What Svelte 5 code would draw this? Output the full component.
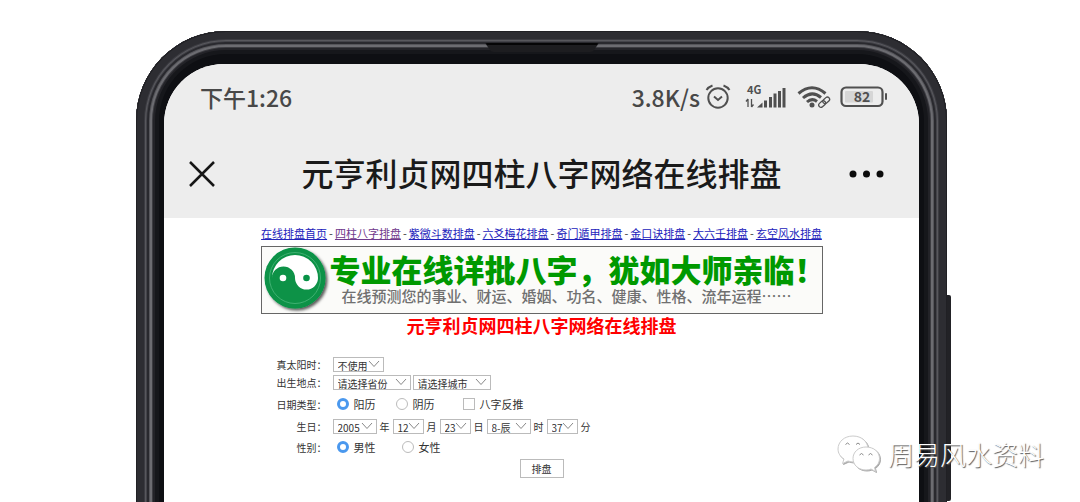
<script lang="ts">
    const links = [
        "在线排盘首页",
        "四柱八字排盘",
        "紫微斗数排盘",
        "六爻梅花排盘",
        "奇门遁甲排盘",
        "金口诀排盘",
        "大六壬排盘",
        "玄空风水排盘",
    ];

    const birthday = [
        { value: "2005", unit: "年", size: "year" },
        { value: "12", unit: "月", size: "short" },
        { value: "23", unit: "日", size: "short" },
        { value: "8-辰", unit: "时", size: "year" },
        { value: "37", unit: "分", size: "short" },
    ];

    let calendar = $state("solar");
    let gender = $state("male");
</script>

{#snippet dropdown(value: string, size: string, label: string, id: string | undefined = undefined)}
    <span class="dropdown {size}">
        <select {id} aria-label={label}>
            <option>{value}</option>
        </select>
        <svg width="12" height="8" viewBox="0 0 12 8" aria-hidden="true">
            <path d="M1 1 L6 6.5 L11 1" fill="none" stroke="#888" />
        </svg>
    </span>
{/snippet}

<main>
    <div class="phone">
        <svg class="speaker" width="114" height="10" viewBox="0 0 114 10" aria-hidden="true">
            <path d="M0 0 H114 L109 7 Q108 9 105 9 H9 Q6 9 5 7 Z" fill="#1d1d20" />
            <path d="M1 0 H113 L112 2 H2 Z" fill="#050506" />
        </svg>

        <div class="screen">
            <header>
                <!-- Status bar -->
                <div class="status">
                    <span class="time">下午1:26</span>
                    <span class="speed">3.8K/s</span>
                    <svg class="alarm" width="26" height="26" viewBox="0 0 26 26" fill="none" stroke="#505050" stroke-width="2">
                        <circle cx="13" cy="14" r="9.7" />
                        <path d="M9 12.5 L13 16 L17 12.5" />
                        <path d="M1.5 6 Q3.5 3 7.5 1.5 M24.5 6 Q22.5 3 18.5 1.5" />
                    </svg>
                    <svg class="signal" width="42" height="32" viewBox="0 -4 42 32" fill="#505050">
                        <text x="2" y="9" font-size="11" font-weight="700">4G</text>
                        <path d="M3 14 V22 M1 16.5 L3 14 M6.5 14 V22 M8.5 19.5 L6.5 22" fill="none" stroke="#505050" stroke-width="1.3" />
                        <path d="M12 22.5 L17.5 17.5 V22.5 Z" />
                        <path d="M19 15.5 h3 v7 h-3z M24 12 h3 v10.5 h-3z M28.5 8.5 h3 v14 h-3z M33 6 h3 v16.5 h-3z M37.5 3 h3 v19.5 h-3z" />
                    </svg>
                    <svg class="wifi" width="34" height="24" viewBox="0 0 34 24" fill="none" stroke="#505050">
                        <path d="M1.5 8.5 Q15 -3 28.5 8.5" stroke-width="3" />
                        <path d="M6 13 Q15 5 24 12.5" stroke-width="3" />
                        <path d="M10 17 Q15 12.5 20 16.5" stroke-width="3" />
                        <circle cx="15" cy="20" r="2.5" fill="#505050" stroke="none" />
                        <g transform="rotate(-42 27 17)" stroke-width="1.3">
                            <rect x="20.5" y="15" width="7.5" height="4.5" rx="2.2" />
                            <rect x="26" y="15" width="7.5" height="4.5" rx="2.2" />
                        </g>
                    </svg>
                    <svg class="battery" width="48" height="24" viewBox="0 0 48 24">
                        <rect x="1.5" y="2.5" width="41" height="18.5" rx="4.5" fill="none" stroke="#505050" stroke-width="2.2" />
                        <rect x="5" y="6" width="28" height="11.5" rx="1" fill="#d6d6d6" />
                        <rect x="45" y="8" width="2" height="7" rx="1" fill="#505050" />
                        <text x="22" y="16.5" text-anchor="middle" font-size="14" font-weight="700" fill="#505050">82</text>
                    </svg>
                </div>

                <!-- Title bar -->
                <div class="titlebar">
                    <button aria-label="关闭">
                        <svg width="28" height="28" viewBox="0 0 28 28">
                            <path d="M2 2 L26 26 M26 2 L2 26" stroke="#161616" stroke-width="2.5" />
                        </svg>
                    </button>
                    <h1>元亨利贞网四柱八字网络在线排盘</h1>
                    <button aria-label="更多">
                        <svg width="36" height="8" viewBox="0 0 36 8" fill="#0c0c0c">
                            <circle cx="4" cy="4" r="3.5" />
                            <circle cx="17.5" cy="4" r="3.5" />
                            <circle cx="31" cy="4" r="3.5" />
                        </svg>
                    </button>
                </div>
            </header>

            <div class="page">
                <nav>
                    {#each links as link, i}
                        {#if i > 0}<span>-</span>{/if}
                        <a href="#{i}" class:visited={i === 1}>{link}</a>
                    {/each}
                </nav>

                <div class="banner">
                    <svg width="68" height="66" viewBox="0 0 68 66" aria-hidden="true">
                        <defs>
                            <filter id="shade" x="-20%" y="-20%" width="140%" height="140%">
                                <feDropShadow dx="2" dy="2" stdDeviation="1.5" flood-color="#000" flood-opacity="0.65" />
                            </filter>
                        </defs>
                        <circle cx="33" cy="31" r="30.5" fill="#079246" filter="url(#shade)" />
                        <circle cx="33" cy="31" r="25.5" fill="none" stroke="#3fb071" />
                        <path d="M10 31 A23 23 0 0 1 56 31 A11.5 11.5 0 0 1 33 31 A11.5 11.5 0 0 0 10 31 Z" fill="#fff" />
                        <circle cx="21" cy="31" r="3.3" fill="#fff" />
                        <circle cx="44.5" cy="31" r="3.3" fill="#079246" />
                    </svg>
                    <div class="banner-text">
                        <strong>专业在线详批八字，犹如大师亲临！</strong>
                        <span>在线预测您的事业、财运、婚姻、功名、健康、性格、流年运程……</span>
                    </div>
                </div>

                <h2>元亨利贞网四柱八字网络在线排盘</h2>

                <form>
                    <div class="row tight">
                        <label class="name" for="sun">真太阳时：</label>
                        {@render dropdown("不使用", "medium", "真太阳时", "sun")}
                    </div>
                    <div class="row tight">
                        <label class="name" for="province">出生地点：</label>
                        {@render dropdown("请选择省份", "wide", "省份", "province")}
                        {@render dropdown("请选择城市", "wide", "城市")}
                    </div>
                    <div class="row dates">
                        <span class="name">日期类型：</span>
                        <label class="choice"><input type="radio" name="calendar" value="solar" bind:group={calendar} />阳历</label>
                        <label class="choice"><input type="radio" name="calendar" value="lunar" bind:group={calendar} />阴历</label>
                        <label class="choice reverse"><input type="checkbox" />八字反推</label>
                    </div>
                    <div class="row">
                        <span class="name">生日：</span>
                        {#each birthday as part}
                            {@render dropdown(part.value, part.size, part.unit)}
                            <span class="unit">{part.unit}</span>
                        {/each}
                    </div>
                    <div class="row gender">
                        <span class="name">性别：</span>
                        <label class="choice"><input type="radio" name="gender" value="male" bind:group={gender} />男性</label>
                        <label class="choice"><input type="radio" name="gender" value="female" bind:group={gender} />女性</label>
                    </div>
                    <button class="submit" type="button">排盘</button>
                </form>
            </div>
        </div>
    </div>

    <!-- Account name over the corner -->
    <div class="account">
        <svg width="44" height="38" viewBox="0 0 44 38" aria-hidden="true">
            <path d="M16 1 C7 1 1 7 1 14 C1 18 3 21.5 7 24 L5.5 28.5 L11 26 Q14 27 17 27 C25 27 31 21 31 14 C31 7 25 1 16 1 Z" />
            <path d="M29 12 C21.5 12 16 17 16 23.5 C16 30 21.5 35 29 35 Q32 35 34 34 L38.5 36.5 L37.5 32.5 C41 30 42.5 27 42.5 23.5 C42.5 17 37 12 29 12 Z" />
            <path class="eyes" d="M8.5 9.5 Q10.5 6.5 12.5 9.5 M19 9.5 Q21 6.5 23 9.5 M22.5 20 Q24.5 17 26.5 20 M31.5 20 Q33.5 17 35.5 20" />
        </svg>
        <span>周易风水资料</span>
    </div>
</main>

<style>
    :global(body) {
        margin: 0;
        background: #fff;
    }

    main {
        position: relative;
        box-sizing: border-box;
        height: 100vh;
        padding: 31px 133px 0 136px;
        overflow: hidden;
        font-family: "Noto Sans CJK SC", sans-serif;
        color: #333;
    }

    button {
        padding: 0;
        border: none;
        background: none;
        font-family: inherit;
        cursor: pointer;
    }

    svg {
        display: block;
        flex: none;
    }

    /* Phone body, the rings are the metal edge */
    .phone {
        position: relative;
        box-sizing: border-box;
        min-height: 100vh;
        padding: 33px 28px 0;
        border-radius: 90px 90px 0 0;
        background: #0e0f13;
        box-shadow:
            inset 0 0 0 1px #202024,
            inset 0 0 0 8px #2d2d32,
            inset 0 0 0 9px #3c3c42,
            inset 0 0 0 10px #58585d,
            inset 0 0 0 11px #44444a,
            inset 0 0 0 13px #29292e,
            inset 0 0 0 14px #55555a,
            inset 0 0 0 16px #6c6c71,
            inset 0 0 0 17px #3c3c41,
            inset 0 0 0 19px #232328,
            inset 0 0 0 23px #16171b;
    }

    .phone::after {
        content: "";
        position: absolute;
        top: 264px;
        right: -4px;
        width: 4px;
        height: 206px;
        border-radius: 0 2px 2px 0;
        background: #222226;
    }

    .speaker {
        position: absolute;
        top: 12px;
        left: 50%;
        margin-left: -57px;
    }

    .screen {
        min-height: 100vh;
        border-radius: 60px 60px 0 0;
        background: #fff;
        overflow: hidden;
    }

    header {
        background: #ededed;
    }

    .status {
        display: flex;
        align-items: center;
        height: 66px;
        padding: 0 31px 0 36px;
        color: #484848;
        font-size: 23px;
        font-weight: 500;
        line-height: 24px;
    }

    .speed {
        margin-left: auto;
    }

    .alarm {
        margin-left: 5px;
    }

    .signal {
        margin-left: 14px;
    }

    .wifi {
        margin-left: 10px;
    }

    .battery {
        margin-left: 9px;
    }

    .titlebar {
        display: flex;
        align-items: center;
        height: 88px;
        padding: 0 34px 0 24px;
    }

    h1 {
        flex: 1;
        margin: 0;
        padding: 0 0 4px 18px;
        color: #1a1a1a;
        font-size: 32px;
        font-weight: 500;
        line-height: 40px;
        text-align: center;
        white-space: nowrap;
    }

    .page {
        width: 562px;
        max-width: 100%;
        margin: 0 auto;
        padding-top: 7px;
    }

    nav {
        display: flex;
        justify-content: center;
        gap: 2px;
        font-size: 11px;
        line-height: 16px;
        white-space: nowrap;
    }

    a {
        color: #2222bb;
    }

    .visited {
        color: #70398c;
    }

    .banner {
        display: flex;
        box-sizing: border-box;
        height: 68px;
        margin-top: 5px;
        border: 1px solid #666;
        background: #fbfbf9;
        white-space: nowrap;
    }

    .banner-text {
        display: flex;
        flex-direction: column;
        width: 0;
        padding-top: 6px;
    }

    .banner strong {
        color: #009900;
        font-size: 31px;
        font-weight: 900;
        line-height: 32px;
    }

    .banner span {
        padding: 1px 0 0 12px;
        color: #707070;
        font-size: 15px;
        font-weight: 500;
        line-height: 20px;
    }

    h2 {
        margin: 0;
        color: #f00;
        font-size: 18px;
        font-weight: 700;
        line-height: 22px;
        text-align: center;
    }

    /* Birth data form */
    form {
        margin-top: 19px;
        padding-left: 16px;
        font-size: 10px;
    }

    .row {
        display: flex;
        align-items: center;
        height: 22px;
    }

    .tight {
        height: 18px;
    }

    .dates {
        margin-top: 2px;
    }

    .gender {
        height: 20px;
    }

    .name {
        width: 50px;
        margin-right: 6px;
        text-align: right;
    }

    .dropdown {
        display: grid;
        align-items: center;
        height: 15px;
        margin-right: 2px;
    }

    .dropdown select,
    .dropdown svg {
        grid-area: 1 / 1;
    }

    .dropdown svg {
        justify-self: end;
        margin-right: 4px;
        pointer-events: none;
    }

    select {
        appearance: none;
        box-sizing: border-box;
        width: 100%;
        height: 15px;
        padding: 1px 4px 0;
        border: 1px solid #bbb;
        border-radius: 0;
        background: #fff;
        color: #333;
        font-family: inherit;
        font-size: 10px;
        line-height: 13px;
    }

    .short {
        width: 31px;
    }

    .year {
        width: 44px;
    }

    .medium {
        width: 51px;
    }

    .wide {
        width: 78px;
    }

    .unit {
        margin: 0 3px 0 1px;
    }

    .choice {
        display: flex;
        align-items: center;
        gap: 5px;
        margin: 0 16px 0 4px;
        font-size: 11px;
    }

    .choice.reverse {
        margin-left: 12px;
    }

    .gender .choice {
        margin-right: 22px;
    }

    .choice input {
        appearance: none;
        box-sizing: border-box;
        width: 12px;
        height: 12px;
        margin: 0;
        border: 1px solid #bbb;
        background: #fff;
    }

    .choice input[type="radio"] {
        border-radius: 50%;
    }

    .choice input[type="radio"]:checked {
        border: 3px solid #4a98ee;
    }

    .submit {
        box-sizing: border-box;
        display: block;
        width: 44px;
        height: 19px;
        margin: 2px 0 0 243px;
        border: 1px solid #bbb;
        background: #fff;
        color: #333;
        font-size: 10px;
        line-height: 16px;
    }

    .account {
        position: absolute;
        right: 36px;
        bottom: 28px;
        display: flex;
        align-items: center;
        gap: 7px;
        color: #fff;
        font-size: 26px;
        font-weight: 300;
        line-height: 40px;
        text-shadow: 1px 1px 1px #555;
    }

    .account svg {
        fill: #fff;
        stroke: #ccc;
        filter: drop-shadow(1px 1px 0 #aaa);
    }

    .account .eyes {
        fill: none;
        stroke: #888;
    }
</style>
